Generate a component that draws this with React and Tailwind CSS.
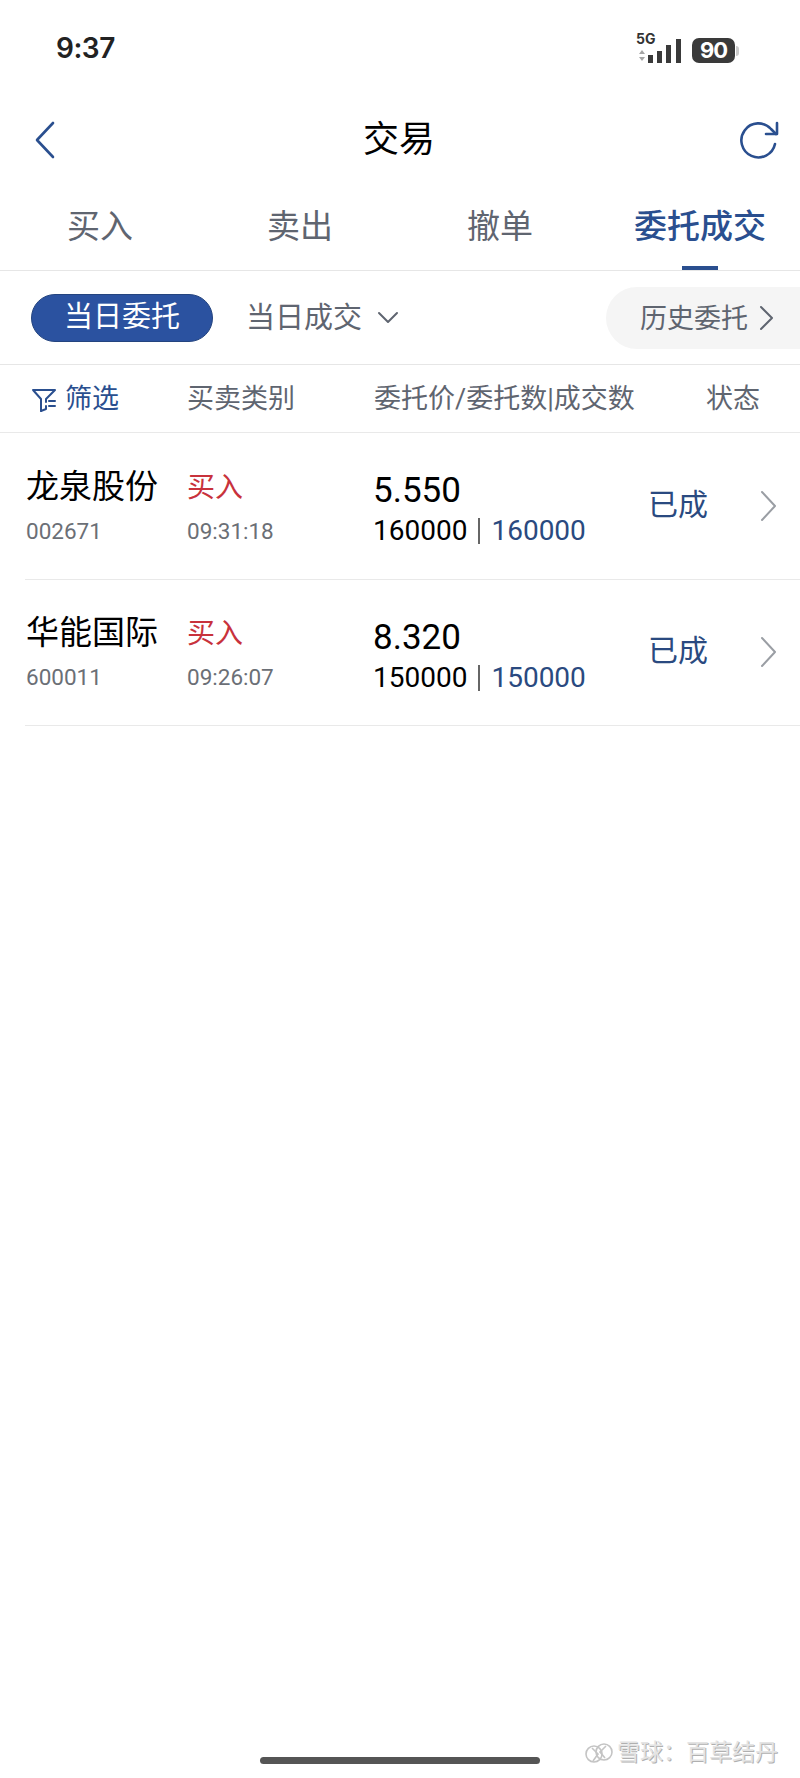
const CJK = "font-['Roboto','Noto_Sans_CJK_SC',sans-serif]";

const orders = [
  { name: "龙泉股份", code: "002671", time: "09:31:18", price: "5.550", qty: "160000" },
  { name: "华能国际", code: "600011", time: "09:26:07", price: "8.320", qty: "150000" },
];

function Chevron({ className, d = "M2 2l12 14L2 30", w = 16, h = 32, strokeWidth = 2 }) {
  return (
    <svg className={className} width={w} height={h} viewBox={`0 0 ${w} ${h}`} fill="none" stroke="currentColor" strokeWidth={strokeWidth} strokeLinecap="round" strokeLinejoin="round">
      <path d={d} />
    </svg>
  );
}

function StatusBar() {
  return (
    <div className="flex h-[96px] items-center justify-between pl-[56px] pr-[61px]">
      <span className="font-['Inter',sans-serif] text-[28px] font-semibold tracking-[-0.5px] text-[#222]">9:37</span>
      <div className="flex items-end gap-[4px]">
        <div className="relative h-[30px] w-[52px]">
          <span className="absolute -top-[2px] left-0 font-['Inter',sans-serif] text-[14px] leading-[16px] font-bold text-[#333]">5G</span>
          <svg className="absolute top-0 left-0" width="52" height="30" viewBox="0 0 52 30">
            <path d="M3 21l3-4 3 4zM3 24l3 4 3-4z" fill="#a5a5a5" />
            <rect x="12" y="22" width="5" height="8" fill="#3a3a3a" />
            <rect x="21" y="18" width="5" height="12" fill="#3a3a3a" />
            <rect x="30" y="12" width="5" height="18" fill="#3a3a3a" />
            <rect x="40" y="6" width="5" height="24" fill="#3a3a3a" />
          </svg>
        </div>
        <div className="flex h-[25px] w-[43px] items-center justify-center rounded-[7px] bg-[#3a3a3a] font-['Inter',sans-serif] text-[22px] font-bold tracking-[-1px] text-white">90</div>
        <div className="mb-[7px] -ml-[3px] h-[10px] w-[3px] rounded-r-sm bg-[#ccc]" />
      </div>
    </div>
  );
}

function NavBar() {
  return (
    <div className="flex h-[88px] items-center justify-between pr-[21px] pl-[34px]">
      <Chevron className="text-[#2a4f8f]" w={22} h={38} d="M19 2L3 19l16 17" strokeWidth={2.6} />
      <span className="ml-[3px] text-[36px] text-black">交易</span>
      <svg width="40" height="40" viewBox="0 0 40 40" fill="none" stroke="#2a4f8f" strokeWidth="2.6" strokeLinecap="round" strokeLinejoin="round">
        <path d="M36 24a17 17 0 1 1-4-15l5 5" />
        <path d="M38 3v11H27" />
      </svg>
    </div>
  );
}

function Tabs() {
  const tabs = ["买入", "卖出", "撤单", "委托成交"];
  return (
    <div className="grid h-[86px] grid-cols-4 border-b border-[#e6e6e6] box-content">
      {tabs.map((t, i) => (
        <div key={t} className="relative flex items-start justify-center pt-[18px]">
          <span className={`text-[33px] leading-[50px] ${i === 3 ? "font-medium text-[#2a4f8f]" : "text-[#5f6570]"}`}>{t}</span>
          {i === 3 && <div className="absolute bottom-0 left-1/2 h-[4px] w-[36px] -translate-x-1/2 bg-[#2a4f8f]" />}
        </div>
      ))}
    </div>
  );
}

function FilterRow() {
  return (
    <div className="flex h-[93px] items-center border-b border-[#e6e6e6] box-content pl-[31px]">
      <div className="flex h-[48px] w-[182px] items-center justify-center rounded-full border border-[#24447f] bg-[#2b52a0] text-[29px] text-white">当日委托</div>
      <span className="mt-[3px] ml-[33px] text-[29px] text-[#5f6570]">当日成交</span>
      <Chevron className="ml-[15px] text-[#5f6570]" w={22} h={14} d="M2 2l9 9 9-9" />
      <div className="ml-auto flex h-[62px] w-[194px] items-center rounded-l-[31px] bg-[#f5f5f5] pl-[34px] text-[27px] text-[#5f6570]">
        <span className="mt-[3px]">历史委托</span>
        <Chevron className="ml-[11px]" w={15} h={26} d="M2 2l11 11L2 24" />
      </div>
    </div>
  );
}

function TableHeader() {
  return (
    <div className="flex h-[65px] items-center border-b border-[#e9e9e9] box-content pt-[2px] text-[27px] text-[#5f6570]">
      <div className="flex w-[187px] items-center pl-[31px]">
        <svg width="26" height="26" viewBox="0 0 26 26" fill="none" stroke="#2a4f8f" strokeWidth="2" strokeLinejoin="round" strokeLinecap="round">
          <path d="M2 3h22l-9 9v3M10 24V12L2 3" />
          <path d="M10 24l5-2v-3M18 14h6M18 19h6" />
        </svg>
        <span className="ml-[8px] text-[#2a4f8f]">筛选</span>
      </div>
      <div className="w-[187px]">买卖类别</div>
      <div className="w-[332px] whitespace-nowrap">委托价/委托数|成交数</div>
      <div>状态</div>
    </div>
  );
}

function OrderRow({ order }) {
  return (
    <div className="ml-[25px] flex h-[145.5px] items-center border-b border-[#e9e9e9] box-content">
      <div className="w-[162px] pl-[1px] pt-[1px]">
        <div className="text-[33px] leading-[46px] text-black">{order.name}</div>
        <div className="mt-[3px] text-[22.5px] leading-[36px] text-[#6b6f76]">{order.code}</div>
      </div>
      <div className="w-[187px] pt-[1px]">
        <div className="mt-[1px] text-[28px] leading-[46px] text-[#c8323c]">买入</div>
        <div className="mt-[2px] text-[22.5px] leading-[36px] text-[#6b6f76]">{order.time}</div>
      </div>
      <div className="w-[274px] pt-[5px]">
        <div className="mt-[1px] -ml-[1px] text-[35px] leading-[46px] text-black">{order.price}</div>
        <div className="-mt-[1px] -ml-[1px] flex items-center text-[28px] leading-[36px]">
          <span className="text-black">{order.qty}</span>
          <span className="mx-[11px] h-[26px] w-[2px] bg-[#666]" />
          <span className="text-[#2a4a80]">{order.qty}</span>
        </div>
      </div>
      <div className="mb-[3px] w-[112px] text-[30px] text-[#2a4a80]">已成</div>
      <Chevron className="text-[#9a9ea4]" w={18} h={32} d="M2 2l13 14L2 30" />
    </div>
  );
}

export default function App() {
  return (
    <div className={`relative h-[1778px] w-[800px] overflow-hidden bg-white ${CJK}`}>
      <StatusBar />
      <NavBar />
      <Tabs />
      <FilterRow />
      <TableHeader />
      {orders.map((o) => (
        <OrderRow key={o.code} order={o} />
      ))}

      {/* watermark */}
      <div className="absolute top-[1738px] left-[585px] flex items-center text-[23px] leading-[30px] whitespace-nowrap text-[#e4e4e4] [text-shadow:1px_1px_0_#b0b0b0]">
        <svg width="28" height="28" viewBox="0 0 28 28" fill="none" stroke="#c4c4c4" strokeWidth="1.6">
          <circle cx="9" cy="15" r="8" />
          <circle cx="19" cy="13" r="8" />
          <path d="M7 9l6 6-5 7M21 7l-6 6 5 6" />
        </svg>
        <span className="ml-[4px]">雪球：百草结丹</span>
      </div>

      <div className="absolute top-[1757px] left-[260px] h-[7px] w-[280px] rounded-full bg-[#555]" />
    </div>
  );
}
